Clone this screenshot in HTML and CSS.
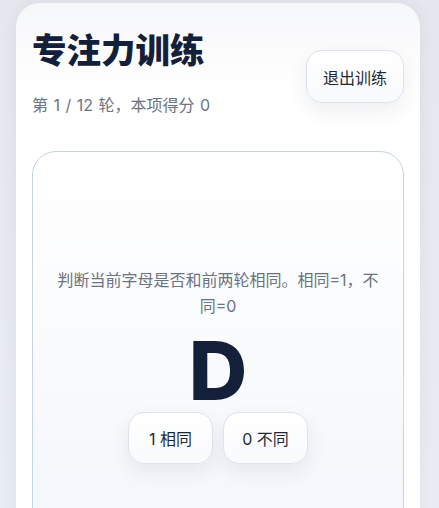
FILE: index.html
```html
<!DOCTYPE html>
<html lang="zh">
<head>
<meta charset="utf-8">
<link rel="stylesheet" href="styles.css">
</head>
<body>
<div class="card">
  <div class="header">
    <div class="head-text">
      <h1 class="title">专注力训练</h1>
      <p class="sub">第 1 / 12 轮，本项得分 0</p>
    </div>
    <button class="btn exit">退出训练</button>
  </div>
  <div class="panel">
    <p class="hint">判断当前字母是否和前两轮相同。相同=1，不同=0</p>
    <div class="letter">D</div>
    <div class="choices">
      <button class="btn choice">1 相同</button>
      <button class="btn choice">0 不同</button>
    </div>
  </div>
</div>
</body>
</html>
```
FILE: styles.css
```css
html, body {
  margin: 0;
  padding: 0;
  height: 100%;
  overflow: hidden;
}
body {
  background: linear-gradient(180deg, #e4e7ed 0%, #e9edf3 100%);
  font-family: Inter, "Noto Sans CJK SC", sans-serif;
  color: #14203a;
}
.card {
  margin: 3px 19px 0 16px;
  padding: 16px 16px 0;
  background: linear-gradient(180deg, #f6f7f9 0%, #ffffff 12%, #ffffff 100%);
  border-radius: 24px 24px 0 0;
  box-shadow: 0 0 18px rgba(30, 40, 70, 0.06);
  height: 700px;
}
.header {
  display: flex;
  justify-content: space-between;
  align-items: center;
}
.title {
  margin: 5px 0 0;
  font-family: "Noto Sans CJK SC", sans-serif;
  font-size: 34.5px;
  font-weight: 900;
  line-height: 48px;
  color: #14203a;
}
.sub {
  margin: 22px 0 0;
  font-size: 16px;
  line-height: 22px;
  word-spacing: 1px;
  color: #6b7280;
}
.btn {
  font-family: Inter, "Noto Sans CJK SC", sans-serif;
  font-size: 16px;
  color: #1f2937;
  background: linear-gradient(180deg, #ffffff 0%, #f9fafc 100%);
  border: 1px solid #dde2ec;
  border-radius: 16px;
  box-shadow: 0 8px 20px rgba(30, 40, 70, 0.08);
  cursor: pointer;
}
.exit {
  width: 98px;
  height: 53px;
  padding: 0;
  margin-top: 18px;
}
.panel {
  margin-top: 35px;
  border: 1px solid #c6d4e3;
  border-radius: 24px 24px 0 0;
  background: linear-gradient(180deg, #ffffff 0%, #f4f7fb 60%, #f3f6fb 100%);
  padding: 115px 20px 0;
  height: 500px;
  text-align: center;
}
.hint {
  margin: 0;
  font-size: 16px;
  line-height: 26px;
  color: #6b7280;
}
.letter {
  font-family: Inter, sans-serif;
  font-size: 81px;
  font-weight: 800;
  line-height: 80px;
  color: #14203a;
  margin-top: 12px;
}
.choices {
  display: flex;
  justify-content: center;
  gap: 10px;
  margin-top: 1px;
}
.choice {
  width: 85px;
  height: 52px;
  padding: 0;
}
```
